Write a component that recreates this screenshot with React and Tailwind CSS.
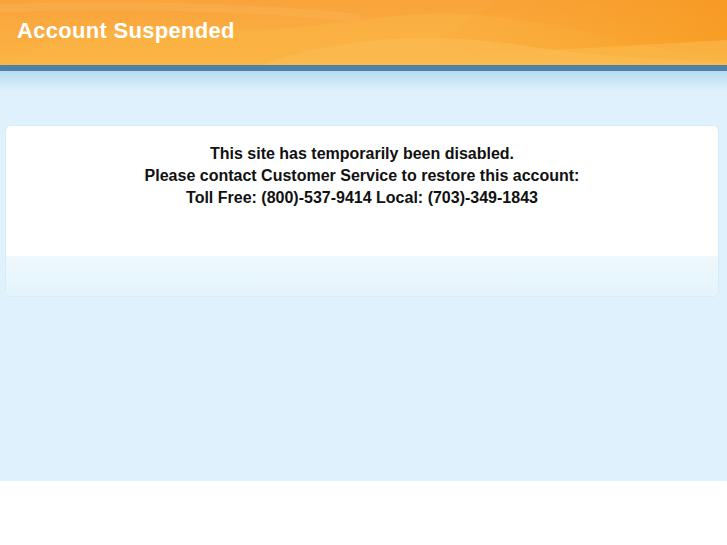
export default function App() {
  return (
    <div className="w-[727px] h-[545px] bg-white font-['Liberation_Sans',Arial,sans-serif]">
      <div className="h-[481px] bg-[#dff1fc] flex flex-col">
        {/* orange banner */}
        <div className="relative h-[65px] overflow-hidden bg-gradient-to-b from-[#f9a33b] to-[#fab544]">
          <svg className="absolute inset-0" width="727" height="65" viewBox="0 0 727 65" preserveAspectRatio="none">
            <defs>
              <linearGradient id="r" x1="0" y1="0" x2="1" y2="0">
                <stop offset="0" stopColor="#f9a02a" stopOpacity="0" />
                <stop offset="1" stopColor="#f7961a" stopOpacity="1" />
              </linearGradient>
            </defs>
            <path d="M0 65 C 60 30, 140 20, 220 28 C 300 36, 380 10, 460 14 C 560 18, 640 50, 727 60 L727 65 Z" fill="#fbb545" opacity="0.5" />
            <path d="M500 0 C 470 20, 440 40, 400 58 C 520 52, 640 45, 727 40 L727 0 Z" fill="url(#r)" opacity="0.7" />
            <path d="M260 65 C 330 40, 420 30, 520 45 C 600 57, 670 60, 727 62 L727 65 Z" fill="#fbbd55" opacity="0.55" />
            <path d="M0 8 C 120 4, 240 6, 360 18" stroke="#fbb65a" strokeWidth="8" fill="none" opacity="0.35" />
          </svg>
          <h1 className="relative pl-[17px] pt-[18px] text-[22px] leading-[26px] tracking-[0.3px] font-bold text-white">
            Account Suspended
          </h1>
        </div>
        <div className="h-[6px] bg-[#4f80a8]" />
        <div className="h-[20px] bg-gradient-to-b from-[#b6dcef] to-[#dff1fc]" />

        <div className="pt-[35px] pl-[6px] pr-[9px]">
          <div className="rounded-[5px] overflow-hidden bg-white shadow-[0_0_0_1px_#d6edf9]">
            <div className="h-[130px] pt-[17px] text-center text-[16px] leading-[22px] font-bold text-[#111]">
              <p>This site has temporarily been disabled.</p>
              <p>Please contact Customer Service to restore this account:</p>
              <p>Toll Free: (800)-537-9414 Local: (703)-349-1843</p>
            </div>
            <div className="h-[40px] bg-gradient-to-b from-[#eef8fd] to-[#e4f4fc]" />
          </div>
        </div>
      </div>
    </div>
  );
}
